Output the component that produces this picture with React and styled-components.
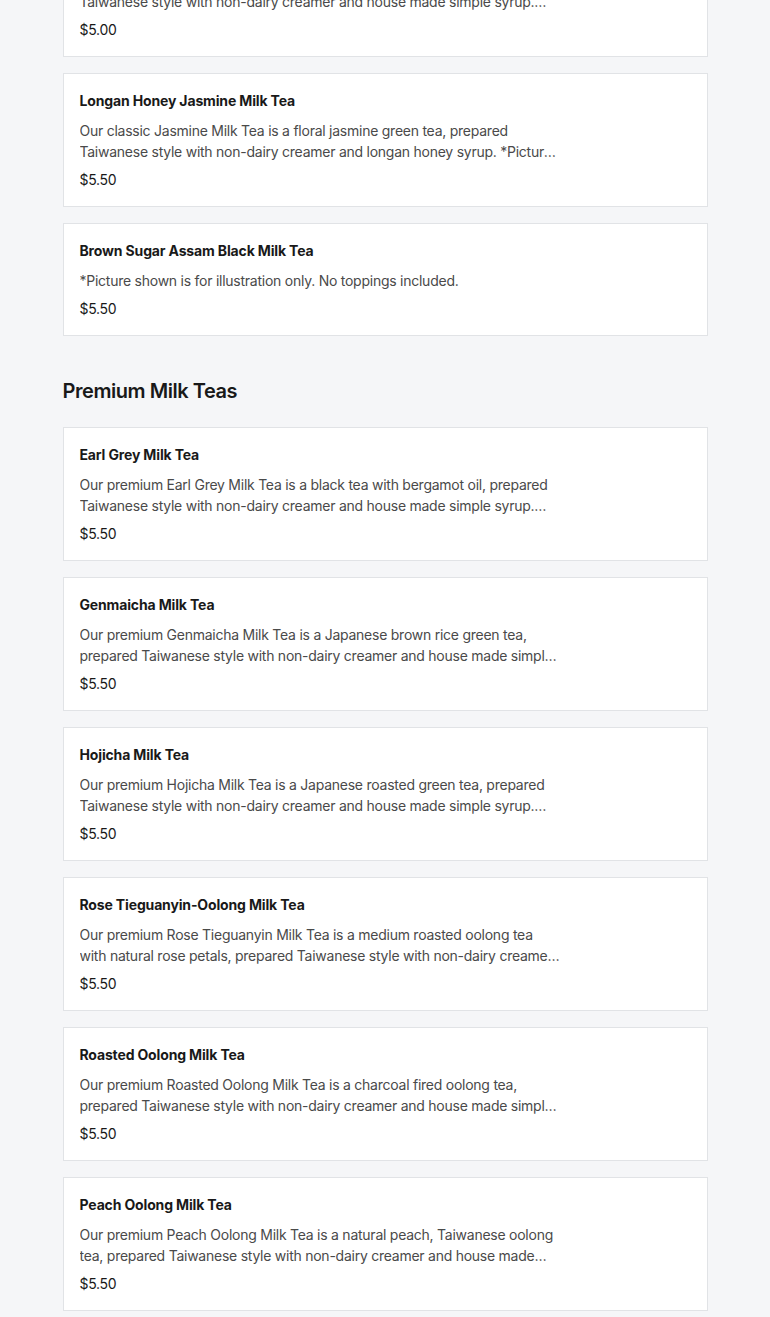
import React from 'react'
import styled, { createGlobalStyle } from 'styled-components'

const GlobalStyle = createGlobalStyle`
  body {
    margin: 0;
    background: #f5f6f8;
    font-family: Inter, "Liberation Sans", sans-serif;
    color: #191919;
  }
`

const Page = styled.div`
  width: 645px;
  margin: -77px auto 0;
  padding-bottom: 40px;
`

const Section = styled.section`
  display: flex;
  flex-direction: column;
  gap: 16px;
`

const SectionTitle = styled.h2`
  margin: 41px 0 22px;
  font-size: 20px;
  line-height: 28px;
  font-weight: 600;
  letter-spacing: -0.45px;
`

const Card = styled.div`
  background: #fff;
  border: 1px solid #e1e3e6;
  padding: 16px;
`

const ItemName = styled.div`
  font-size: 14px;
  line-height: 22px;
  font-weight: 700;
  letter-spacing: -0.15px;
`

const ItemDesc = styled.p`
  margin: 8px 0 0;
  max-width: 481px;
  font-size: 14px;
  line-height: 21px;
  letter-spacing: -0.25px;
  color: #4a4a4a;
  display: -webkit-box;
  -webkit-line-clamp: 2;
  -webkit-box-orient: vertical;
  overflow: hidden;
`

const Price = styled.div`
  margin-top: 8px;
  font-size: 14px;
  line-height: 20px;
  letter-spacing: -0.3px;
`

const classic = [
  {
    name: 'Jasmine Milk Tea',
    desc: 'Our classic Jasmine Milk Tea is a floral jasmine green tea, prepared Taiwanese style with non-dairy creamer and house made simple syrup. *Picture shown is for illustration only. No toppings included.',
    price: '$5.00',
  },
  {
    name: 'Longan Honey Jasmine Milk Tea',
    desc: 'Our classic Jasmine Milk Tea is a floral jasmine green tea, prepared Taiwanese style with non-dairy creamer and longan honey syrup. *Picture shown is for illustration only. No toppings included.',
    price: '$5.50',
  },
  {
    name: 'Brown Sugar Assam Black Milk Tea',
    desc: '*Picture shown is for illustration only. No toppings included.',
    price: '$5.50',
  },
]

const premium = [
  {
    name: 'Earl Grey Milk Tea',
    desc: 'Our premium Earl Grey Milk Tea is a black tea with bergamot oil, prepared Taiwanese style with non-dairy creamer and house made simple syrup. *Picture shown is for illustration only.',
  },
  {
    name: 'Genmaicha Milk Tea',
    desc: 'Our premium Genmaicha Milk Tea is a Japanese brown rice green tea, prepared Taiwanese style with non-dairy creamer and house made simple syrup.',
  },
  {
    name: 'Hojicha Milk Tea',
    desc: 'Our premium Hojicha Milk Tea is a Japanese roasted green tea, prepared Taiwanese style with non-dairy creamer and house made simple syrup. *Picture shown is for illustration only.',
  },
  {
    name: 'Rose Tieguanyin-Oolong Milk Tea',
    desc: 'Our premium Rose Tieguanyin Milk Tea is a medium roasted oolong tea with natural rose petals, prepared Taiwanese style with non-dairy creamer and house made simple syrup.',
  },
  {
    name: 'Roasted Oolong Milk Tea',
    desc: 'Our premium Roasted Oolong Milk Tea is a charcoal fired oolong tea, prepared Taiwanese style with non-dairy creamer and house made simple syrup.',
  },
  {
    name: 'Peach Oolong Milk Tea',
    desc: 'Our premium Peach Oolong Milk Tea is a natural peach, Taiwanese oolong tea, prepared Taiwanese style with non-dairy creamer and house made simple syrup.',
  },
].map((item) => ({ ...item, price: '$5.50' }))

const MenuItem = ({ name, desc, price }) => (
  <Card>
    <ItemName>{name}</ItemName>
    <ItemDesc>{desc}</ItemDesc>
    <Price>{price}</Price>
  </Card>
)

export default function App() {
  return (
    <>
      <GlobalStyle />
      <Page>
        <Section>
          {classic.map((item) => (
            <MenuItem key={item.name} {...item} />
          ))}
        </Section>
        <SectionTitle>Premium Milk Teas</SectionTitle>
        <Section>
          {premium.map((item) => (
            <MenuItem key={item.name} {...item} />
          ))}
        </Section>
      </Page>
    </>
  )
}
